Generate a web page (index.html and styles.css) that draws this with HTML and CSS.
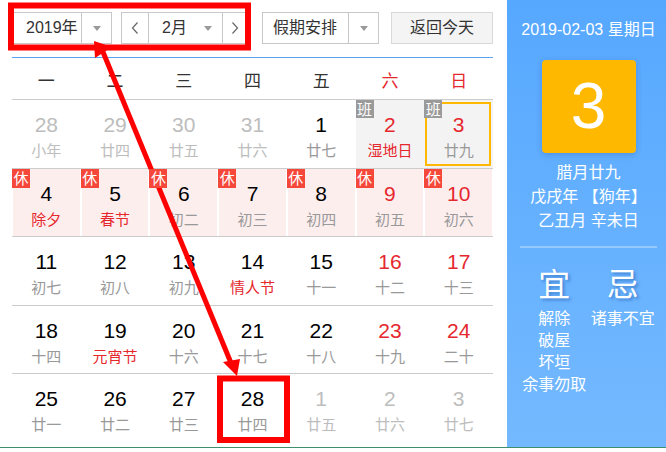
FILE: index.html
```html
<!DOCTYPE html>
<html lang="zh-CN">
<head>
<meta charset="utf-8">
<title>万年历</title>
<link rel="stylesheet" href="styles.css">
</head>
<body>
<div class="app">
  <div class="main">
    <div class="toolbar">
      <div class="select year"><span class="sel-text">2019年</span><span class="sel-arrow"><i class="tri"></i></span></div>
      <div class="month-group">
        <span class="nav"><svg width="8" height="12" viewBox="0 0 8 12"><polyline points="6.5,0.5 1.5,6 6.5,11.5" fill="none" stroke="#666" stroke-width="1.2"/></svg></span>
        <span class="month-sel"><span>2月</span><i class="tri"></i></span>
        <span class="nav next"><svg width="8" height="12" viewBox="0 0 8 12"><polyline points="1.5,0.5 6.5,6 1.5,11.5" fill="none" stroke="#666" stroke-width="1.2"/></svg></span>
      </div>
      <div class="select holiday"><span class="sel-text">假期安排</span><span class="sel-arrow"><i class="tri"></i></span></div>
      <div class="today-btn">返回今天</div>
    </div>
    <div class="calendar">
      <div class="weekdays">
        <div>一</div><div>二</div><div>三</div><div>四</div><div>五</div><div class="red">六</div><div class="red">日</div>
      </div>
      <div class="week">
        <div class="cell other"><div class="num">28</div><div class="lunar">小年</div></div>
        <div class="cell other"><div class="num">29</div><div class="lunar">廿四</div></div>
        <div class="cell other"><div class="num">30</div><div class="lunar">廿五</div></div>
        <div class="cell other"><div class="num">31</div><div class="lunar">廿六</div></div>
        <div class="cell"><div class="num">1</div><div class="lunar">廿七</div></div>
        <div class="cell work"><span class="badge gray">班</span><div class="num red">2</div><div class="lunar red">湿地日</div></div>
        <div class="cell work today"><span class="badge gray">班</span><div class="num red">3</div><div class="lunar">廿九</div></div>
      </div>
      <div class="week">
        <div class="cell rest"><span class="badge">休</span><div class="num">4</div><div class="lunar red">除夕</div></div>
        <div class="cell rest"><span class="badge">休</span><div class="num">5</div><div class="lunar red">春节</div></div>
        <div class="cell rest"><span class="badge">休</span><div class="num">6</div><div class="lunar">初二</div></div>
        <div class="cell rest"><span class="badge">休</span><div class="num">7</div><div class="lunar">初三</div></div>
        <div class="cell rest"><span class="badge">休</span><div class="num">8</div><div class="lunar">初四</div></div>
        <div class="cell rest"><span class="badge">休</span><div class="num red">9</div><div class="lunar">初五</div></div>
        <div class="cell rest"><span class="badge">休</span><div class="num red">10</div><div class="lunar">初六</div></div>
      </div>
      <div class="week">
        <div class="cell"><div class="num">11</div><div class="lunar">初七</div></div>
        <div class="cell"><div class="num">12</div><div class="lunar">初八</div></div>
        <div class="cell"><div class="num">13</div><div class="lunar">初九</div></div>
        <div class="cell"><div class="num">14</div><div class="lunar red">情人节</div></div>
        <div class="cell"><div class="num">15</div><div class="lunar">十一</div></div>
        <div class="cell"><div class="num red">16</div><div class="lunar">十二</div></div>
        <div class="cell"><div class="num red">17</div><div class="lunar">十三</div></div>
      </div>
      <div class="week">
        <div class="cell"><div class="num">18</div><div class="lunar">十四</div></div>
        <div class="cell"><div class="num">19</div><div class="lunar red">元宵节</div></div>
        <div class="cell"><div class="num">20</div><div class="lunar">十六</div></div>
        <div class="cell"><div class="num">21</div><div class="lunar">十七</div></div>
        <div class="cell"><div class="num">22</div><div class="lunar">十八</div></div>
        <div class="cell"><div class="num red">23</div><div class="lunar">十九</div></div>
        <div class="cell"><div class="num red">24</div><div class="lunar">二十</div></div>
      </div>
      <div class="week last">
        <div class="cell"><div class="num">25</div><div class="lunar">廿一</div></div>
        <div class="cell"><div class="num">26</div><div class="lunar">廿二</div></div>
        <div class="cell"><div class="num">27</div><div class="lunar">廿三</div></div>
        <div class="cell"><div class="num">28</div><div class="lunar">廿四</div></div>
        <div class="cell other"><div class="num">1</div><div class="lunar">廿五</div></div>
        <div class="cell other"><div class="num">2</div><div class="lunar">廿六</div></div>
        <div class="cell other"><div class="num">3</div><div class="lunar">廿七</div></div>
      </div>
    </div>
  </div>
  <aside class="side">
    <div class="side-date">2019-02-03 星期日</div>
    <div class="day-box">3</div>
    <div class="lunar-info">
      <div>腊月廿九</div>
      <div>戊戌年 【狗年】</div>
      <div>乙丑月 辛未日</div>
    </div>
    <div class="divider"></div>
    <div class="yiji">
      <div class="yj-col">
        <div class="yj-title">宜</div>
        <div class="yj-list"><div>解除</div><div>破屋</div><div>坏垣</div><div>余事勿取</div></div>
      </div>
      <div class="yj-col">
        <div class="yj-title">忌</div>
        <div class="yj-list"><div>诸事不宜</div></div>
      </div>
    </div>
  </aside>
</div>
<svg class="annot" width="666" height="452" viewBox="0 0 666 452">
  <rect x="11" y="5.5" width="237" height="42" fill="none" stroke="#f00" stroke-width="6"/>
  <rect x="220" y="378.5" width="67" height="61.5" fill="none" stroke="#f00" stroke-width="6"/>
  <line x1="103" y1="52" x2="231" y2="363" stroke="#f00" stroke-width="5"/>
  <polygon points="94,41 112,47 95,58" fill="#f00"/>
  <polygon points="223,362 240,359 237,376" fill="#f00"/>
</svg>
</body>
</html>
```
FILE: styles.css
```css
html, body {
  margin: 0;
  padding: 0;
  background: #fff;
}
body {
  width: 666px;
  height: 452px;
  position: relative;
  overflow: hidden;
  font-family: "Liberation Sans", "Noto Sans CJK SC", sans-serif;
  color: #000;
}
.app {
  display: flex;
  height: 447px;
  border-bottom: 1px solid #3f8f6f;
}
.main {
  width: 507px;
  box-sizing: border-box;
  padding: 12px 14px 0 12px;
}
.toolbar {
  display: flex;
  height: 32px;
  font-size: 16px;
  color: #333;
}
.select {
  display: flex;
  border: 1px solid #c8c8c8;
  box-sizing: border-box;
  background: #fff;
}
.year {
  margin-left: 1px;
  width: 99px;
}
.year .sel-text {
  width: 68px;
  padding-left: 12px;
}
.sel-text {
  box-sizing: border-box;
  line-height: 30px;
  border-right: 1px solid #c8c8c8;
}
.sel-arrow {
  flex: 1;
  display: flex;
  align-items: center;
  justify-content: center;
}
.tri {
  display: block;
  width: 0;
  height: 0;
  border-left: 4px solid transparent;
  border-right: 4px solid transparent;
  border-top: 5px solid #999;
}
.month-group {
  display: flex;
  margin-left: 9px;
  border: 1px solid #c8c8c8;
  box-sizing: border-box;
  width: 127px;
}
.nav {
  width: 26px;
  display: flex;
  align-items: center;
  justify-content: center;
  border-right: 1px solid #c8c8c8;
}
.nav.next {
  border-right: none;
  width: 23px;
}
.month-sel {
  width: 74px;
  display: flex;
  align-items: center;
  justify-content: space-between;
  padding: 0 10px 0 13px;
  box-sizing: border-box;
  border-right: 1px solid #c8c8c8;
  line-height: 30px;
}
.holiday {
  margin-left: 14px;
  width: 117px;
}
.holiday .sel-text {
  width: 86px;
  padding-left: 10px;
}
.today-btn {
  margin-left: 12px;
  width: 102px;
  box-sizing: border-box;
  border: 1px solid #d9d9d9;
  background: #f4f4f4;
  text-align: center;
  line-height: 30px;
}
.calendar {
  margin-top: 13px;
  border-top: 1px solid #5ba3f0;
}
.weekdays {
  display: grid;
  grid-template-columns: repeat(7, 1fr);
  height: 42px;
  box-sizing: border-box;
  border-bottom: 1px solid #ccc;
  font-size: 17px;
  color: #333;
  font-family: "Noto Sans CJK SC", sans-serif;
}
.weekdays div {
  text-align: center;
  line-height: 43px;
}
.red {
  color: #e5282e !important;
}
.week {
  display: grid;
  grid-template-columns: repeat(7, 1fr);
  height: 68.5px;
  box-sizing: border-box;
  border-bottom: 1px solid #ccc;
}
.week.last {
  border-bottom: none;
}
.cell {
  position: relative;
  text-align: center;
  padding-top: 12px;
}
.num {
  font-size: 21px;
  line-height: 26px;
  color: #000;
}
.lunar {
  font-size: 15px;
  line-height: 24px;
  color: #999;
  font-family: "Noto Sans CJK SC", sans-serif;
}
.other .num,
.other .lunar {
  color: #bdbdbd;
}
.rest {
  background: #fdeeee;
  box-shadow: inset 1px 0 #fff, inset -1px 0 #fff;
}
.work {
  background: #f3f3f3;
}
.today::before {
  content: "";
  position: absolute;
  top: 2px;
  right: 2px;
  bottom: 2px;
  left: 1px;
  border: 2px solid #ffb800;
}
.badge {
  position: absolute;
  top: 0;
  left: 0;
  z-index: 1;
  width: 18px;
  height: 19px;
  background: #f5473a;
  color: #fff;
  font-size: 15px;
  line-height: 18px;
  text-align: center;
  font-family: "Noto Sans CJK SC", sans-serif;
}
.badge.gray {
  background: #9a9a9a;
  height: 18px;
}
.side {
  width: 159px;
  box-sizing: border-box;
  padding: 20px 9px 0 13px;
  background: linear-gradient(#56a8ff, #74b9ff);
  color: #fff;
  text-align: center;
  font-size: 16px;
  font-family: "Liberation Sans", "Noto Sans CJK SC", sans-serif;
}
.side-date {
  line-height: 20px;
}
.day-box {
  width: 94px;
  height: 93px;
  margin: 20px auto 0;
  background: #ffb800;
  border-radius: 4px;
  box-shadow: 0 2px 6px rgba(0, 40, 120, 0.2);
  font-size: 64px;
  line-height: 93px;
}
.lunar-info {
  margin-top: 8px;
  line-height: 24px;
}
.divider {
  height: 2px;
  margin-top: 13px;
  background: rgba(255, 255, 255, 0.3);
}
.yiji {
  display: flex;
}
.yj-col {
  flex: 1;
}
.yj-title {
  margin-top: 14px;
  font-size: 32px;
  line-height: 40px;
  font-family: "Noto Sans CJK SC", sans-serif;
  text-shadow: 2px 2px 3px rgba(20, 70, 150, 0.45);
}
.yj-list {
  margin-top: 4px;
  line-height: 22px;
  font-family: "Noto Sans CJK SC", sans-serif;
}
.annot {
  position: absolute;
  top: 0;
  left: 0;
  pointer-events: none;
}
```
